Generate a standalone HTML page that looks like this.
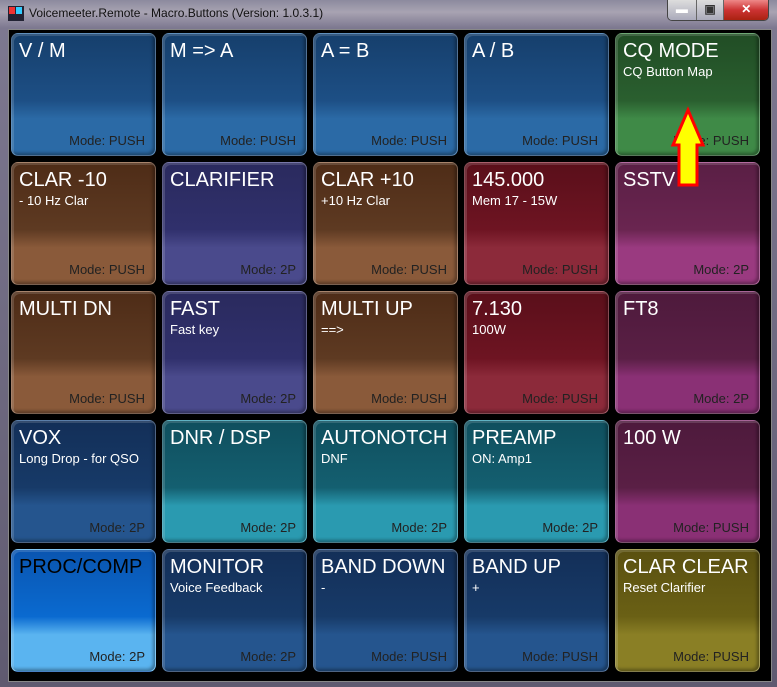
<!DOCTYPE html><html><head><style>
body{margin:0;width:777px;height:687px;overflow:hidden;background:#6a6478;font-family:"Liberation Sans",sans-serif}
.win{position:absolute;left:0;top:0;width:777px;height:687px;background:linear-gradient(180deg,#8c8a9e 0,#a8a3b2 12px,#7d7890 28px,#5f5a70 100%)}
.title{position:absolute;left:29px;top:6px;font-size:12px;color:#111}
.ico{position:absolute;left:8px;top:6px;width:16px;height:15px;background:#223}
.ico:before{content:"";position:absolute;left:1px;top:1px;width:6px;height:7px;background:#e33;box-shadow:7px 0 0 #3cf}
.btns{position:absolute;left:667px;top:0;width:100px;height:20px;border:1px solid #444;border-top:0;border-radius:0 0 5px 5px;overflow:hidden;display:flex}
.btns div{height:20px;color:#fff;font-size:12px;text-align:center;line-height:19px;font-weight:bold}
.inner{position:absolute;left:8px;top:29px;width:762px;height:651px;background:#000;border:1px solid #888}
.b{position:absolute;width:145px;height:123px;border-radius:7px;box-sizing:border-box;border:1px solid rgba(255,255,255,.25);box-shadow:inset 2px 2px 0 rgba(255,255,255,.15),inset -2px -2px 3px rgba(0,0,0,.35)}
.b .t{position:absolute;left:7px;top:6px;font-size:20px;color:#fff;white-space:nowrap}
.b .s{position:absolute;left:7px;top:30px;font-size:13px;color:#fff;white-space:nowrap}
.b .m{position:absolute;right:10px;bottom:7px;font-size:13px;color:#222}
</style></head><body><div class="win">
<div class="ico"></div><div class="title">Voicemeeter.Remote - Macro.Buttons (Version: 1.0.3.1)</div>
<div class="btns"><div style="width:28px;background:linear-gradient(#ddd,#aab)">▬</div><div style="width:27px;background:linear-gradient(#ddd,#aab);border-left:1px solid #666;color:#333">▣</div><div style="width:44px;background:linear-gradient(#e88,#c33 50%,#a21);border-left:1px solid #666">✕</div></div>
<div class="inner"></div>
<div id="g"></div>
<svg style="position:absolute;left:0;top:0" width="777" height="687"><polygon points="688,110 703,145 697,145 697,185 679,185 679,145 673,145" fill="#ff0" stroke="#f00" stroke-width="3"/></svg>
</div>
<script>
var C={bl:["#163f6c","#1d4f85","#2b6aa6"],gr:["#214d25","#2a5f2f","#3f8a47"],br:["#4e2c17","#5e3a22","#8a5a3a"],in:["#2a2a5e","#30306c","#4a4a8c"],rd:["#5a0f1a","#6e1422","#8c2a3a"],pu:["#5a1f45","#6a2550","#9a3a80"],mp:["#4e1a3c","#5a1f45","#8a3075"],te:["#0f4f5e","#145f70","#2a9ab0"],nv:["#132f58","#173a68","#25558e"],pr:["#0a55b0","#0a6ad0","#5ab4f0"],ol:["#5a5010","#6a6015","#8a7f25"]};
var D=[["V / M","","PUSH","bl"],["M => A","","PUSH","bl"],["A = B","","PUSH","bl"],["A / B","","PUSH","bl"],["CQ MODE","CQ Button Map","PUSH","gr"],
["CLAR -10","- 10 Hz Clar","PUSH","br"],["CLARIFIER","","2P","in"],["CLAR +10","+10 Hz Clar","PUSH","br"],["145.000","Mem 17 - 15W","PUSH","rd"],["SSTV","","2P","pu"],
["MULTI DN","","PUSH","br"],["FAST","Fast key","2P","in"],["MULTI UP","==>","PUSH","br"],["7.130","100W","PUSH","rd"],["FT8","","2P","mp"],
["VOX","Long Drop - for QSO","2P","nv"],["DNR / DSP","","2P","te"],["AUTONOTCH","DNF","2P","te"],["PREAMP","ON: Amp1","2P","te"],["100 W","","PUSH","mp"],
["PROC/COMP","","2P","pr"],["MONITOR","Voice Feedback","2P","nv"],["BAND DOWN","-","PUSH","nv"],["BAND UP","+","PUSH","nv"],["CLAR CLEAR","Reset Clarifier","PUSH","ol"]];
var h="";D.forEach(function(d,i){var c=C[d[3]],x=11+(i%5)*151,y=33+Math.floor(i/5)*129;
h+='<div class="b" style="left:'+x+'px;top:'+y+'px;background:linear-gradient(180deg,'+c[0]+' 0,'+c[1]+' 55%,'+c[2]+' 70%,'+c[2]+' 100%)"><div class="t"'+(d[3]=="pr"?' style="color:#000"':'')+'>'+d[0].replace(/>/g,"&gt;")+'</div><div class="s">'+d[1].replace(/>/g,"&gt;")+'</div><div class="m">Mode: '+d[2]+'</div></div>';});
document.getElementById("g").innerHTML=h;
</script></body></html>
